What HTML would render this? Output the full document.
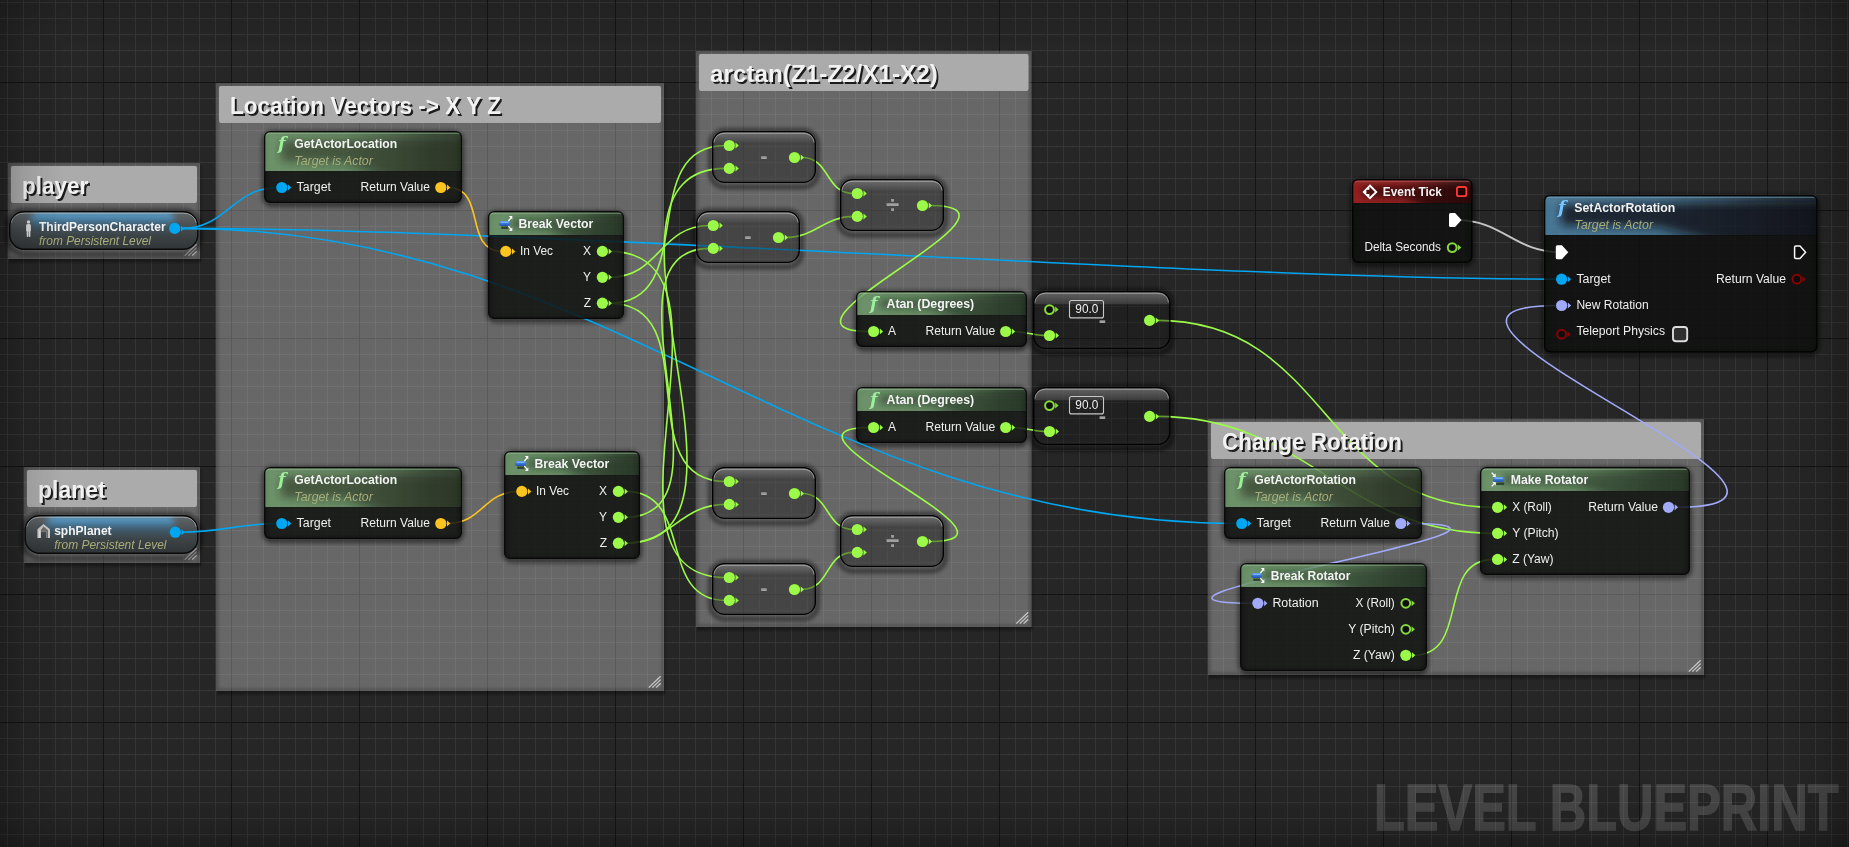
<!DOCTYPE html>
<html><head><meta charset="utf-8"><title>Level Blueprint</title>
<style>
html,body{margin:0;padding:0;background:#262626;overflow:hidden}
body{width:1849px;height:847px;position:relative;font-family:"Liberation Sans",sans-serif}
#grid{position:absolute;left:0;top:0;width:1849px;height:847px;background-color:#262626;
background-image:
linear-gradient(90deg,#141414 1px,transparent 1px),
linear-gradient(0deg,#141414 1px,transparent 1px),
linear-gradient(90deg,#353535 1px,transparent 1px),
linear-gradient(0deg,#353535 1px,transparent 1px);
background-size:128px 128px,128px 128px,16px 16px,16px 16px;
background-position:103px 0,0 -45px,7px 0,0 3px}
#vig{position:absolute;left:0;top:0;width:1849px;height:847px;
background:linear-gradient(90deg,rgba(0,0,0,.2),rgba(0,0,0,.08) 1.4%,rgba(0,0,0,0) 3.4%,rgba(0,0,0,0) 96.6%,rgba(0,0,0,.08) 98.6%,rgba(0,0,0,.2)),
linear-gradient(180deg,rgba(0,0,0,.1),rgba(0,0,0,0) 5%,rgba(0,0,0,0) 92%,rgba(0,0,0,.08) 97%,rgba(0,0,0,.2))}
svg{position:absolute;left:0;top:0}
text{font-family:"Liberation Sans",sans-serif;fill:#fff}
.ct{font-size:23.5px;font-weight:bold;fill:#f2f2f2}
.cts{font-size:23.5px;font-weight:bold;fill:#1c1c1c}
.nt{font-size:12px;font-weight:bold;fill:#f4f4f4}
.st{font-size:12px;font-style:italic;fill:#a9ae7c}
.pl{font-size:12px;fill:#f0f0f0}
.fi{font-family:"DejaVu Serif",serif;font-style:italic;font-weight:bold;font-size:17.5px}
.cg{font-size:22px;font-weight:bold;fill:#a0a0a0}
.cd{font-size:24px;font-weight:bold;fill:#a0a0a0}
.wm{font-size:65.5px;font-weight:bold;fill:#fff;stroke:#fff;stroke-width:1.4px;opacity:.155}
.sh2{fill:none;stroke:#000;stroke-width:4;stroke-opacity:.55;filter:url(#blur2)}
.sh{fill:none;stroke:#000;stroke-width:5;stroke-opacity:.62;filter:url(#blur)}
#wires path{fill:none}
</style></head>
<body>
<div id="grid"></div>
<svg width="1849" height="847" viewBox="0 0 1849 847">
<defs>
<filter id="b2" x="-5%" y="-5%" width="110%" height="110%"><feGaussianBlur stdDeviation="1.6"/></filter>
<linearGradient id="cshb" x1="0" y1="0" x2="0" y2="1"><stop offset="0" stop-color="#000" stop-opacity=".42"/><stop offset="1" stop-color="#000" stop-opacity="0"/></linearGradient>
<linearGradient id="cshr" x1="0" y1="0" x2="1" y2="0"><stop offset="0" stop-color="#000" stop-opacity=".18"/><stop offset="1" stop-color="#000" stop-opacity="0"/></linearGradient>
<filter id="hb4" x="-20%" y="-50%" width="140%" height="200%"><feGaussianBlur stdDeviation="4"/></filter>
<filter id="hb3" x="-20%" y="-80%" width="140%" height="260%"><feGaussianBlur stdDeviation="3.2"/></filter>
<linearGradient id="sg"><stop offset="0" stop-color="#6f9c6c"/><stop offset=".4" stop-color="#6f9c6c" stop-opacity=".92"/><stop offset=".65" stop-color="#6f9c6c" stop-opacity=".6"/><stop offset=".85" stop-color="#6f9c6c" stop-opacity=".3"/><stop offset="1" stop-color="#6f9c6c" stop-opacity=".16"/></linearGradient>
<linearGradient id="sb"><stop offset="0" stop-color="#4f88ab"/><stop offset=".4" stop-color="#4f88ab" stop-opacity=".92"/><stop offset=".65" stop-color="#4f88ab" stop-opacity=".6"/><stop offset=".85" stop-color="#4f88ab" stop-opacity=".3"/><stop offset="1" stop-color="#4f88ab" stop-opacity=".16"/></linearGradient>
<linearGradient id="sr"><stop offset="0" stop-color="#ac2020"/><stop offset=".4" stop-color="#ac2020" stop-opacity=".92"/><stop offset=".65" stop-color="#ac2020" stop-opacity=".6"/><stop offset=".85" stop-color="#ac2020" stop-opacity=".3"/><stop offset="1" stop-color="#ac2020" stop-opacity=".16"/></linearGradient>
<filter id="blur2" x="-20%" y="-30%" width="140%" height="170%"><feGaussianBlur stdDeviation="2"/></filter>
<filter id="blur" x="-20%" y="-20%" width="140%" height="160%"><feGaussianBlur stdDeviation="2.6"/></filter>
<linearGradient id="pill" x1="0" y1="0" x2="0" y2="1"><stop offset="0" stop-color="#4f94ee"/><stop offset=".5" stop-color="#3a78da"/><stop offset="1" stop-color="#2450a8"/></linearGradient>
<linearGradient id="gloss" x1="0" y1="0" x2="0" y2="1"><stop offset="0" stop-color="#fff" stop-opacity=".1"/><stop offset=".3" stop-color="#fff" stop-opacity="0"/><stop offset="1" stop-color="#fff" stop-opacity="0"/></linearGradient>
<linearGradient id="cg" x1="0" y1="0" x2="0" y2="1"><stop offset="0" stop-color="#747474" stop-opacity=".82"/><stop offset=".215" stop-color="#404040" stop-opacity=".82"/><stop offset=".235" stop-color="#181818" stop-opacity=".43"/><stop offset=".92" stop-color="#181818" stop-opacity=".43"/><stop offset="1" stop-color="#262626" stop-opacity=".45"/></linearGradient>
<linearGradient id="vg" x1="0" y1="0" x2="0" y2="1"><stop offset="0" stop-color="#62676a" stop-opacity=".95"/><stop offset=".45" stop-color="#42484b" stop-opacity=".94"/><stop offset="1" stop-color="#2c3133" stop-opacity=".94"/></linearGradient>
<linearGradient id="vglow" x1="0" y1="0" x2="0" y2="1"><stop offset="0" stop-color="#70c0f4"/><stop offset=".25" stop-color="#4596cc" stop-opacity=".75"/><stop offset=".6" stop-color="#2f6a90" stop-opacity=".4"/><stop offset="1" stop-color="#2a5a78" stop-opacity=".05"/></linearGradient>
<clipPath id="c1"><rect x="10.5" y="212.5" width="186.5" height="36" rx="13.5"/></clipPath>
<clipPath id="c2"><rect x="26" y="516.5" width="171" height="36" rx="13.5"/></clipPath>
<clipPath id="c3"><path d="M1.4 40V6q0-4.6 4.6-4.6H192q4.6 0 4.6 4.6V40z"/></clipPath>
<clipPath id="c4"><path d="M1.4 40V6q0-4.6 4.6-4.6H192q4.6 0 4.6 4.6V40z"/></clipPath>
<clipPath id="c5"><path d="M1.4 40V6q0-4.6 4.6-4.6H192q4.6 0 4.6 4.6V40z"/></clipPath>
<clipPath id="c6"><path d="M1.4 24V6q0-4.6 4.6-4.6H130q4.6 0 4.6 4.6V24z"/></clipPath>
<clipPath id="c7"><path d="M1.4 24V6q0-4.6 4.6-4.6H130q4.6 0 4.6 4.6V24z"/></clipPath>
<clipPath id="c8"><path d="M1.4 24V6q0-4.6 4.6-4.6H165q4.6 0 4.6 4.6V24z"/></clipPath>
<clipPath id="c9"><path d="M1.4 24V6q0-4.6 4.6-4.6H165q4.6 0 4.6 4.6V24z"/></clipPath>
<clipPath id="c10"><path d="M1.4 24V6q0-4.6 4.6-4.6H114.5q4.6 0 4.6 4.6V24z"/></clipPath>
<clipPath id="c11"><path d="M1.4 40V6q0-4.6 4.6-4.6H267.5q4.6 0 4.6 4.6V40z"/></clipPath>
<clipPath id="c12"><path d="M1.4 24V6q0-4.6 4.6-4.6H204q4.6 0 4.6 4.6V24z"/></clipPath>
<clipPath id="c13"><path d="M1.4 24V6q0-4.6 4.6-4.6H181q4.6 0 4.6 4.6V24z"/></clipPath></defs>
<g id="comments">
<rect x="9" y="259" width="192" height="6" fill="url(#cshb)"/>
<rect x="200" y="165" width="4" height="96" fill="url(#cshr)"/>
<rect x="8" y="163" width="192" height="96" fill="#fff" fill-opacity=".2"/>
<rect x="10.5" y="165.5" width="187" height="91" rx="2" fill="#fff" fill-opacity=".125" filter="url(#b2)"/>
<rect x="11" y="166.1" width="186" height="36.8" rx="1.8" fill="#ababab"/>
<path d="M196.7 244.2l-12 11.4M196.7 247.6l-8.4 8M196.7 251.3l-4.6 4.3" stroke="#c8c8c8" stroke-width="1.25" fill="none"/>
<rect x="25" y="563" width="176" height="6" fill="url(#cshb)"/>
<rect x="200" y="469" width="4" height="96" fill="url(#cshr)"/>
<rect x="24" y="467" width="176" height="96" fill="#fff" fill-opacity=".2"/>
<rect x="26.5" y="469.5" width="171" height="91" rx="2" fill="#fff" fill-opacity=".125" filter="url(#b2)"/>
<rect x="27" y="470.1" width="170" height="36.8" rx="1.8" fill="#ababab"/>
<path d="M196.7 548.2l-12 11.4M196.7 551.6l-8.4 8M196.7 555.3l-4.6 4.3" stroke="#c8c8c8" stroke-width="1.25" fill="none"/>
<rect x="217" y="691" width="448" height="6" fill="url(#cshb)"/>
<rect x="664" y="85" width="4" height="608" fill="url(#cshr)"/>
<rect x="216" y="83" width="448" height="608" fill="#fff" fill-opacity=".2"/>
<rect x="218.5" y="85.5" width="443" height="603" rx="2" fill="#fff" fill-opacity=".125" filter="url(#b2)"/>
<rect x="219" y="86.1" width="442" height="36.8" rx="1.8" fill="#ababab"/>
<path d="M660.7 676.2l-12 11.4M660.7 679.6l-8.4 8M660.7 683.3l-4.6 4.3" stroke="#c8c8c8" stroke-width="1.25" fill="none"/>
<rect x="697" y="627" width="335.5" height="6" fill="url(#cshb)"/>
<rect x="1031.5" y="53" width="4" height="576" fill="url(#cshr)"/>
<rect x="696" y="51" width="335.5" height="576" fill="#fff" fill-opacity=".2"/>
<rect x="698.5" y="53.5" width="330.5" height="571" rx="2" fill="#fff" fill-opacity=".125" filter="url(#b2)"/>
<rect x="699" y="54.1" width="329.5" height="36.8" rx="1.8" fill="#ababab"/>
<path d="M1028.2 612.2l-12 11.4M1028.2 615.6l-8.4 8M1028.2 619.3l-4.6 4.3" stroke="#c8c8c8" stroke-width="1.25" fill="none"/>
<rect x="1209" y="675" width="496" height="6" fill="url(#cshb)"/>
<rect x="1704" y="421" width="4" height="256" fill="url(#cshr)"/>
<rect x="1208" y="419" width="496" height="256" fill="#fff" fill-opacity=".2"/>
<rect x="1210.5" y="421.5" width="491" height="251" rx="2" fill="#fff" fill-opacity=".125" filter="url(#b2)"/>
<rect x="1211" y="422.1" width="490" height="36.8" rx="1.8" fill="#ababab"/>
<path d="M1700.7 660.2l-12 11.4M1700.7 663.6l-8.4 8M1700.7 667.3l-4.6 4.3" stroke="#c8c8c8" stroke-width="1.25" fill="none"/>
</g>
<g id="shadows">
<rect x="7.5" y="210.5" width="192.5" height="43.5" rx="16.5" class="sh2"/>
<rect x="9.7" y="211.7" width="188.1" height="37.6" rx="14.5" fill="url(#vg)" stroke="#0a0a0a" stroke-width="1.4"/>
<g clip-path="url(#c1)"><rect x="31" y="212" width="143.5" height="22" rx="6" fill="url(#vglow)" filter="url(#hb3)"/></g>
<path d="M11.2 222.8q2.5-9.6 13-9.6H183.3q10.5 0 13 9.6" fill="none" stroke="#fff" stroke-opacity=".4" stroke-width="1"/>
<rect x="23" y="514.5" width="177" height="43.5" rx="16.5" class="sh2"/>
<rect x="25.2" y="515.7" width="172.6" height="37.6" rx="14.5" fill="url(#vg)" stroke="#0a0a0a" stroke-width="1.4"/>
<g clip-path="url(#c2)"><rect x="46.5" y="516" width="128" height="22" rx="6" fill="url(#vglow)" filter="url(#hb3)"/></g>
<path d="M26.7 526.8q2.5-9.6 13-9.6H183.3q10.5 0 13 9.6" fill="none" stroke="#fff" stroke-opacity=".4" stroke-width="1"/>
<g transform="translate(24.5 220)" fill="#d8d8d8"><circle cx="4" cy="2" r="1.7"/><rect x="1.6" y="4" width="4.8" height="7.5" rx="1.6"/><rect x="2.2" y="10" width="1.7" height="7" rx=".8"/><rect x="4.2" y="10" width="1.7" height="7" rx=".8"/></g>
<g transform="translate(37 524)"><path d="M6.5 0L13 5.2V14H9.4V7.6H3.8V14H.4V5.2z" fill="#c9c9c9"/><path d="M6.5 2.6L11 6.2V14H9.4V7.6H3.8V6.2z" fill="#6e6e6e"/><path d="M2 6.4h1.8V14H2z" fill="#fff" fill-opacity=".5"/></g>
<rect x="265" y="133.5" width="196" height="70.5" rx="7" class="sh"/>
<rect x="265" y="469.5" width="196" height="70.5" rx="7" class="sh"/>
<rect x="1225" y="469.5" width="196" height="70.5" rx="7" class="sh"/>
<rect x="489" y="213.5" width="134" height="106.5" rx="7" class="sh"/>
<rect x="505" y="453.5" width="134" height="106.5" rx="7" class="sh"/>
<rect x="710.5" y="130.5" width="107" height="56.5" rx="14" class="sh2"/>
<rect x="694.5" y="210.5" width="107" height="56.5" rx="14" class="sh2"/>
<rect x="838.5" y="178.5" width="107" height="56.5" rx="14" class="sh2"/>
<rect x="710.5" y="466.5" width="107" height="56.5" rx="14" class="sh2"/>
<rect x="710.5" y="562.5" width="107" height="56.5" rx="14" class="sh2"/>
<rect x="838.5" y="514.5" width="107" height="56.5" rx="14" class="sh2"/>
<rect x="857" y="293.5" width="169" height="54.5" rx="7" class="sh"/>
<rect x="857" y="389.5" width="169" height="54.5" rx="7" class="sh"/>
<rect x="1031.5" y="290.5" width="140.5" height="62.5" rx="14" class="sh2"/>
<rect x="1031.5" y="386.5" width="140.5" height="62.5" rx="14" class="sh2"/>
<rect x="1353" y="181.5" width="118.5" height="82.5" rx="7" class="sh"/>
<rect x="1545" y="197.5" width="271.5" height="156" rx="7" class="sh"/>
<rect x="1481" y="469.5" width="208" height="106.5" rx="7" class="sh"/>
<rect x="1241" y="565.5" width="185" height="106.5" rx="7" class="sh"/>
</g>
<g id="wires">
<path d="M181.7 228.4C227.53 228.4 232.47 187.5 278.3 187.5" stroke="#00a6f0" stroke-width="1.6"/>
<path d="M181.7 228.4C531.97 228.4 1207.83 279.2 1558.1 279.2" stroke="#00a6f0" stroke-width="1.6"/>
<path d="M181.7 228.4C613.4 228.4 806.6 523.5 1238.3 523.5" stroke="#00a6f0" stroke-width="1.6"/>
<path d="M182.3 532.2C217.2 532.2 243.4 523.5 278.3 523.5" stroke="#00a6f0" stroke-width="1.6"/>
<path d="M447.8 187.5C487.27 187.5 462.83 251.4 502.3 251.4" stroke="#fcc41e" stroke-width="1.6"/>
<path d="M447.8 523.5C482 523.5 484.1 491.4 518.3 491.4" stroke="#fcc41e" stroke-width="1.6"/>
<path d="M609.4 251.4C756.9 251.4 578.3 577.5 725.8 577.5" stroke="#9bf947" stroke-width="1.6"/>
<path d="M609.4 277.3C660.13 277.3 659.07 225.5 709.8 225.5" stroke="#9bf947" stroke-width="1.6"/>
<path d="M609.4 303.2C700.77 303.2 634.43 145.5 725.8 145.5" stroke="#9bf947" stroke-width="1.6"/>
<path d="M609.4 303.2C707.63 303.2 627.57 481.5 725.8 481.5" stroke="#9bf947" stroke-width="1.6"/>
<path d="M625.4 491.4C695.2 491.4 656 600.4 725.8 600.4" stroke="#9bf947" stroke-width="1.6"/>
<path d="M625.4 517.3C743.17 517.3 592.03 248.4 709.8 248.4" stroke="#9bf947" stroke-width="1.6"/>
<path d="M625.4 543.2C783.8 543.2 567.4 168.4 725.8 168.4" stroke="#9bf947" stroke-width="1.6"/>
<path d="M625.4 543.2C671.8 543.2 679.4 504.4 725.8 504.4" stroke="#9bf947" stroke-width="1.6"/>
<path d="M801.5 157.5C830.93 157.5 824.37 193.5 853.8 193.5" stroke="#9bf947" stroke-width="1.6"/>
<path d="M785.5 237.5C815.3 237.5 824 216.4 853.8 216.4" stroke="#9bf947" stroke-width="1.6"/>
<path d="M801.5 493.5C830.93 493.5 824.37 529.5 853.8 529.5" stroke="#9bf947" stroke-width="1.6"/>
<path d="M801.5 589.5C831.3 589.5 824 552.4 853.8 552.4" stroke="#9bf947" stroke-width="1.6"/>
<path d="M929.5 205.5C1051.9 205.5 747.7 331.5 870.1 331.5" stroke="#9bf947" stroke-width="1.6"/>
<path d="M929.5 541.5C1045.9 541.5 753.7 427.5 870.1 427.5" stroke="#9bf947" stroke-width="1.6"/>
<path d="M1012.7 331.5C1025.13 331.5 1033.57 335.5 1046 335.5" stroke="#9bf947" stroke-width="1.6"/>
<path d="M1012.7 427.5C1025.13 427.5 1033.57 431.5 1046 431.5" stroke="#9bf947" stroke-width="1.6"/>
<path d="M1156.6 320.4C1331.4 320.4 1319.3 507.3 1494.1 507.3" stroke="#9bf947" stroke-width="1.6"/>
<path d="M1156.6 416.4C1308.08 416.4 1342.62 533.35 1494.1 533.35" stroke="#9bf947" stroke-width="1.6"/>
<path d="M1412.8 655.3C1471.87 655.3 1435.03 559.4 1494.1 559.4" stroke="#9bf947" stroke-width="1.6"/>
<path d="M1407.8 523.5C1601.1 523.5 1061.1 603.3 1254.4 603.3" stroke="#a0aaf8" stroke-width="1.6"/>
<path d="M1675.5 507.3C1892.9 507.3 1340.7 305.5 1558.1 305.5" stroke="#a0aaf8" stroke-width="1.6"/>
<path d="M1457 220.1C1502.03 220.1 1514.97 252.2 1560 252.2" stroke="#c4c4c4" stroke-width="1.9"/>
</g>
<g id="nodes">
<circle cx="174.7" cy="228.4" r="5.6" fill="#00a6f0"/>
<path d="M180.9 225.4l3.3 3-3.3 3z" fill="#00a6f0"/>
<circle cx="175.3" cy="532.2" r="5.6" fill="#00a6f0"/>
<path d="M181.5 529.2l3.3 3-3.3 3z" fill="#00a6f0"/>
<g transform="translate(264 131)" opacity=".83">
<rect x=".7" y=".7" width="196.6" height="70.6" rx="5.5" fill="#0e100e" stroke="#000" stroke-width="1.4"/>
<g clip-path="url(#c3)">
<rect width="198" height="40" fill="#1a2a18" fill-opacity=".7"/>
<rect width="198" height="40" fill="url(#sg)"/>
<path d="M17 9.5L204 7L204 48L130.68 48L83.16 32L17 30.5z" fill="#1a2a18" fill-opacity=".58" filter="url(#hb4)"/>
<rect width="198" height="40" fill="url(#gloss)"/>
<path d="M1.4 2.1H196.6" stroke="#a6dca2" stroke-opacity=".6" stroke-width="1.1"/>
</g>
<path d="M1.4 40.5H196.6" stroke="#0a0b0a" stroke-opacity=".75" stroke-width="1"/>
</g>
<circle cx="281.8" cy="187.5" r="5.6" fill="#00a6f0"/>
<path d="M288 184.5l3.3 3-3.3 3z" fill="#00a6f0"/>
<circle cx="440.8" cy="187.5" r="5.6" fill="#fcc41e"/>
<path d="M447 184.5l3.3 3-3.3 3z" fill="#fcc41e"/>
<g transform="translate(264 467)" opacity=".83">
<rect x=".7" y=".7" width="196.6" height="70.6" rx="5.5" fill="#0e100e" stroke="#000" stroke-width="1.4"/>
<g clip-path="url(#c4)">
<rect width="198" height="40" fill="#1a2a18" fill-opacity=".7"/>
<rect width="198" height="40" fill="url(#sg)"/>
<path d="M17 9.5L204 7L204 48L130.68 48L83.16 32L17 30.5z" fill="#1a2a18" fill-opacity=".58" filter="url(#hb4)"/>
<rect width="198" height="40" fill="url(#gloss)"/>
<path d="M1.4 2.1H196.6" stroke="#a6dca2" stroke-opacity=".6" stroke-width="1.1"/>
</g>
<path d="M1.4 40.5H196.6" stroke="#0a0b0a" stroke-opacity=".75" stroke-width="1"/>
</g>
<circle cx="281.8" cy="523.5" r="5.6" fill="#00a6f0"/>
<path d="M288 520.5l3.3 3-3.3 3z" fill="#00a6f0"/>
<circle cx="440.8" cy="523.5" r="5.6" fill="#fcc41e"/>
<path d="M447 520.5l3.3 3-3.3 3z" fill="#fcc41e"/>
<g transform="translate(1224 467)" opacity=".83">
<rect x=".7" y=".7" width="196.6" height="70.6" rx="5.5" fill="#0e100e" stroke="#000" stroke-width="1.4"/>
<g clip-path="url(#c5)">
<rect width="198" height="40" fill="#1a2a18" fill-opacity=".7"/>
<rect width="198" height="40" fill="url(#sg)"/>
<path d="M17 9.5L204 7L204 48L130.68 48L83.16 32L17 30.5z" fill="#1a2a18" fill-opacity=".58" filter="url(#hb4)"/>
<rect width="198" height="40" fill="url(#gloss)"/>
<path d="M1.4 2.1H196.6" stroke="#a6dca2" stroke-opacity=".6" stroke-width="1.1"/>
</g>
<path d="M1.4 40.5H196.6" stroke="#0a0b0a" stroke-opacity=".75" stroke-width="1"/>
</g>
<circle cx="1241.8" cy="523.5" r="5.6" fill="#00a6f0"/>
<path d="M1248 520.5l3.3 3-3.3 3z" fill="#00a6f0"/>
<circle cx="1400.8" cy="523.5" r="5.6" fill="#a0aaf8"/>
<path d="M1407 520.5l3.3 3-3.3 3z" fill="#a0aaf8"/>
<g transform="translate(488 211)" opacity=".83">
<rect x=".7" y=".7" width="134.6" height="106.6" rx="5.5" fill="#0e100e" stroke="#000" stroke-width="1.4"/>
<g clip-path="url(#c6)">
<rect width="136" height="24" fill="#1a2a18" fill-opacity=".7"/>
<rect width="136" height="24" fill="url(#sg)"/>
<path d="M24 8L142 6.5L142 32L95.2 32L61.2 18.5L24 17.5z" fill="#1a2a18" fill-opacity=".5" filter="url(#hb3)"/>
<rect width="136" height="24" fill="url(#gloss)"/>
<path d="M1.4 2.1H134.6" stroke="#a6dca2" stroke-opacity=".6" stroke-width="1.1"/>
</g>
<path d="M1.4 24.5H134.6" stroke="#0a0b0a" stroke-opacity=".75" stroke-width="1"/>
</g>
<g transform="translate(498 215.5)">
<rect x="3" y="10.9" width="7.6" height="2.7" rx="1.3" fill="#0a160a" fill-opacity=".6"/>
<rect x="1" y="5.4" width="11.2" height="5.1" rx="2.5" fill="url(#pill)"/>
<rect x="2.6" y="6.1" width="8" height="1.5" rx=".7" fill="#8cc0ff" fill-opacity=".75"/>
<path d="M10.4 5.5L13 2.4M10.4 10.6L13 13.6" stroke="#fff" stroke-width="1.3" fill="none"/>
<path d="M14.3 .5v3.6L10.8.5zM14.3 15.6v-3.6l-3.5 3.6z" fill="#fff"/>
</g>
<circle cx="505.8" cy="251.4" r="5.6" fill="#fcc41e"/>
<path d="M512 248.4l3.3 3-3.3 3z" fill="#fcc41e"/>
<circle cx="602.4" cy="251.4" r="5.6" fill="#9bf947"/>
<path d="M608.6 248.4l3.3 3-3.3 3z" fill="#9bf947"/>
<circle cx="602.4" cy="277.3" r="5.6" fill="#9bf947"/>
<path d="M608.6 274.3l3.3 3-3.3 3z" fill="#9bf947"/>
<circle cx="602.4" cy="303.2" r="5.6" fill="#9bf947"/>
<path d="M608.6 300.2l3.3 3-3.3 3z" fill="#9bf947"/>
<g transform="translate(504 451)" opacity=".83">
<rect x=".7" y=".7" width="134.6" height="106.6" rx="5.5" fill="#0e100e" stroke="#000" stroke-width="1.4"/>
<g clip-path="url(#c7)">
<rect width="136" height="24" fill="#1a2a18" fill-opacity=".7"/>
<rect width="136" height="24" fill="url(#sg)"/>
<path d="M24 8L142 6.5L142 32L95.2 32L61.2 18.5L24 17.5z" fill="#1a2a18" fill-opacity=".5" filter="url(#hb3)"/>
<rect width="136" height="24" fill="url(#gloss)"/>
<path d="M1.4 2.1H134.6" stroke="#a6dca2" stroke-opacity=".6" stroke-width="1.1"/>
</g>
<path d="M1.4 24.5H134.6" stroke="#0a0b0a" stroke-opacity=".75" stroke-width="1"/>
</g>
<g transform="translate(514 455.5)">
<rect x="3" y="10.9" width="7.6" height="2.7" rx="1.3" fill="#0a160a" fill-opacity=".6"/>
<rect x="1" y="5.4" width="11.2" height="5.1" rx="2.5" fill="url(#pill)"/>
<rect x="2.6" y="6.1" width="8" height="1.5" rx=".7" fill="#8cc0ff" fill-opacity=".75"/>
<path d="M10.4 5.5L13 2.4M10.4 10.6L13 13.6" stroke="#fff" stroke-width="1.3" fill="none"/>
<path d="M14.3 .5v3.6L10.8.5zM14.3 15.6v-3.6l-3.5 3.6z" fill="#fff"/>
</g>
<circle cx="521.8" cy="491.4" r="5.6" fill="#fcc41e"/>
<path d="M528 488.4l3.3 3-3.3 3z" fill="#fcc41e"/>
<circle cx="618.4" cy="491.4" r="5.6" fill="#9bf947"/>
<path d="M624.6 488.4l3.3 3-3.3 3z" fill="#9bf947"/>
<circle cx="618.4" cy="517.3" r="5.6" fill="#9bf947"/>
<path d="M624.6 514.3l3.3 3-3.3 3z" fill="#9bf947"/>
<circle cx="618.4" cy="543.2" r="5.6" fill="#9bf947"/>
<path d="M624.6 540.2l3.3 3-3.3 3z" fill="#9bf947"/>
<rect x="712.65" y="131.65" width="102.7" height="50.7" rx="12" fill="url(#cg)" stroke="#000" stroke-width="1.3"/>
<path d="M714 142.5q1-9.2 11.5-9.2H802.5q10.5 0 11.5 9.2" fill="none" stroke="#fff" stroke-opacity=".38" stroke-width="1"/>
<circle cx="729.3" cy="145.5" r="5.6" fill="#9bf947"/>
<path d="M735.5 142.5l3.3 3-3.3 3z" fill="#9bf947"/>
<circle cx="729.3" cy="168.4" r="5.6" fill="#9bf947"/>
<path d="M735.5 165.4l3.3 3-3.3 3z" fill="#9bf947"/>
<circle cx="794.5" cy="157.5" r="5.6" fill="#9bf947"/>
<path d="M800.7 154.5l3.3 3-3.3 3z" fill="#9bf947"/>
<rect x="696.65" y="211.65" width="102.7" height="50.7" rx="12" fill="url(#cg)" stroke="#000" stroke-width="1.3"/>
<path d="M698 222.5q1-9.2 11.5-9.2H786.5q10.5 0 11.5 9.2" fill="none" stroke="#fff" stroke-opacity=".38" stroke-width="1"/>
<circle cx="713.3" cy="225.5" r="5.6" fill="#9bf947"/>
<path d="M719.5 222.5l3.3 3-3.3 3z" fill="#9bf947"/>
<circle cx="713.3" cy="248.4" r="5.6" fill="#9bf947"/>
<path d="M719.5 245.4l3.3 3-3.3 3z" fill="#9bf947"/>
<circle cx="778.5" cy="237.5" r="5.6" fill="#9bf947"/>
<path d="M784.7 234.5l3.3 3-3.3 3z" fill="#9bf947"/>
<rect x="840.65" y="179.65" width="102.7" height="50.7" rx="12" fill="url(#cg)" stroke="#000" stroke-width="1.3"/>
<path d="M842 190.5q1-9.2 11.5-9.2H930.5q10.5 0 11.5 9.2" fill="none" stroke="#fff" stroke-opacity=".38" stroke-width="1"/>
<circle cx="857.3" cy="193.5" r="5.6" fill="#9bf947"/>
<path d="M863.5 190.5l3.3 3-3.3 3z" fill="#9bf947"/>
<circle cx="857.3" cy="216.4" r="5.6" fill="#9bf947"/>
<path d="M863.5 213.4l3.3 3-3.3 3z" fill="#9bf947"/>
<circle cx="922.5" cy="205.5" r="5.6" fill="#9bf947"/>
<path d="M928.7 202.5l3.3 3-3.3 3z" fill="#9bf947"/>
<rect x="712.65" y="467.65" width="102.7" height="50.7" rx="12" fill="url(#cg)" stroke="#000" stroke-width="1.3"/>
<path d="M714 478.5q1-9.2 11.5-9.2H802.5q10.5 0 11.5 9.2" fill="none" stroke="#fff" stroke-opacity=".38" stroke-width="1"/>
<circle cx="729.3" cy="481.5" r="5.6" fill="#9bf947"/>
<path d="M735.5 478.5l3.3 3-3.3 3z" fill="#9bf947"/>
<circle cx="729.3" cy="504.4" r="5.6" fill="#9bf947"/>
<path d="M735.5 501.4l3.3 3-3.3 3z" fill="#9bf947"/>
<circle cx="794.5" cy="493.5" r="5.6" fill="#9bf947"/>
<path d="M800.7 490.5l3.3 3-3.3 3z" fill="#9bf947"/>
<rect x="712.65" y="563.65" width="102.7" height="50.7" rx="12" fill="url(#cg)" stroke="#000" stroke-width="1.3"/>
<path d="M714 574.5q1-9.2 11.5-9.2H802.5q10.5 0 11.5 9.2" fill="none" stroke="#fff" stroke-opacity=".38" stroke-width="1"/>
<circle cx="729.3" cy="577.5" r="5.6" fill="#9bf947"/>
<path d="M735.5 574.5l3.3 3-3.3 3z" fill="#9bf947"/>
<circle cx="729.3" cy="600.4" r="5.6" fill="#9bf947"/>
<path d="M735.5 597.4l3.3 3-3.3 3z" fill="#9bf947"/>
<circle cx="794.5" cy="589.5" r="5.6" fill="#9bf947"/>
<path d="M800.7 586.5l3.3 3-3.3 3z" fill="#9bf947"/>
<rect x="840.65" y="515.65" width="102.7" height="50.7" rx="12" fill="url(#cg)" stroke="#000" stroke-width="1.3"/>
<path d="M842 526.5q1-9.2 11.5-9.2H930.5q10.5 0 11.5 9.2" fill="none" stroke="#fff" stroke-opacity=".38" stroke-width="1"/>
<circle cx="857.3" cy="529.5" r="5.6" fill="#9bf947"/>
<path d="M863.5 526.5l3.3 3-3.3 3z" fill="#9bf947"/>
<circle cx="857.3" cy="552.4" r="5.6" fill="#9bf947"/>
<path d="M863.5 549.4l3.3 3-3.3 3z" fill="#9bf947"/>
<circle cx="922.5" cy="541.5" r="5.6" fill="#9bf947"/>
<path d="M928.7 538.5l3.3 3-3.3 3z" fill="#9bf947"/>
<g transform="translate(856 291)" opacity=".83">
<rect x=".7" y=".7" width="169.6" height="54.6" rx="5.5" fill="#0e100e" stroke="#000" stroke-width="1.4"/>
<g clip-path="url(#c8)">
<rect width="171" height="24" fill="#1a2a18" fill-opacity=".7"/>
<rect width="171" height="24" fill="url(#sg)"/>
<path d="M24 8L177 6.5L177 32L119.7 32L76.95 18.5L24 17.5z" fill="#1a2a18" fill-opacity=".5" filter="url(#hb3)"/>
<rect width="171" height="24" fill="url(#gloss)"/>
<path d="M1.4 2.1H169.6" stroke="#a6dca2" stroke-opacity=".6" stroke-width="1.1"/>
</g>
<path d="M1.4 24.5H169.6" stroke="#0a0b0a" stroke-opacity=".75" stroke-width="1"/>
</g>
<circle cx="873.6" cy="331.5" r="5.6" fill="#9bf947"/>
<path d="M879.8 328.5l3.3 3-3.3 3z" fill="#9bf947"/>
<circle cx="1005.7" cy="331.5" r="5.6" fill="#9bf947"/>
<path d="M1011.9 328.5l3.3 3-3.3 3z" fill="#9bf947"/>
<g transform="translate(856 387)" opacity=".83">
<rect x=".7" y=".7" width="169.6" height="54.6" rx="5.5" fill="#0e100e" stroke="#000" stroke-width="1.4"/>
<g clip-path="url(#c9)">
<rect width="171" height="24" fill="#1a2a18" fill-opacity=".7"/>
<rect width="171" height="24" fill="url(#sg)"/>
<path d="M24 8L177 6.5L177 32L119.7 32L76.95 18.5L24 17.5z" fill="#1a2a18" fill-opacity=".5" filter="url(#hb3)"/>
<rect width="171" height="24" fill="url(#gloss)"/>
<path d="M1.4 2.1H169.6" stroke="#a6dca2" stroke-opacity=".6" stroke-width="1.1"/>
</g>
<path d="M1.4 24.5H169.6" stroke="#0a0b0a" stroke-opacity=".75" stroke-width="1"/>
</g>
<circle cx="873.6" cy="427.5" r="5.6" fill="#9bf947"/>
<path d="M879.8 424.5l3.3 3-3.3 3z" fill="#9bf947"/>
<circle cx="1005.7" cy="427.5" r="5.6" fill="#9bf947"/>
<path d="M1011.9 424.5l3.3 3-3.3 3z" fill="#9bf947"/>
<rect x="1033.65" y="291.65" width="136.2" height="56.7" rx="12" fill="url(#cg)" stroke="#000" stroke-width="1.3"/>
<path d="M1035 302.5q1-9.2 11.5-9.2H1157q10.5 0 11.5 9.2" fill="none" stroke="#fff" stroke-opacity=".38" stroke-width="1"/>
<circle cx="1049.5" cy="309.6" r="4.4" fill="#0d0d0d" stroke="#86da3c" stroke-width="2"/>
<path d="M1055.2 306.6l3.4 3-3.4 3z" fill="#86da3c"/>
<circle cx="1049.5" cy="335.5" r="5.6" fill="#9bf947"/>
<path d="M1055.7 332.5l3.3 3-3.3 3z" fill="#9bf947"/>
<circle cx="1149.6" cy="320.4" r="5.6" fill="#9bf947"/>
<path d="M1155.8 317.4l3.3 3-3.3 3z" fill="#9bf947"/>
<rect x="1069.5" y="300.5" width="34" height="17.4" rx="2" fill="none" stroke="#c6c6c6" stroke-width="1.1"/>
<rect x="1033.65" y="387.65" width="136.2" height="56.7" rx="12" fill="url(#cg)" stroke="#000" stroke-width="1.3"/>
<path d="M1035 398.5q1-9.2 11.5-9.2H1157q10.5 0 11.5 9.2" fill="none" stroke="#fff" stroke-opacity=".38" stroke-width="1"/>
<circle cx="1049.5" cy="405.6" r="4.4" fill="#0d0d0d" stroke="#86da3c" stroke-width="2"/>
<path d="M1055.2 402.6l3.4 3-3.4 3z" fill="#86da3c"/>
<circle cx="1049.5" cy="431.5" r="5.6" fill="#9bf947"/>
<path d="M1055.7 428.5l3.3 3-3.3 3z" fill="#9bf947"/>
<circle cx="1149.6" cy="416.4" r="5.6" fill="#9bf947"/>
<path d="M1155.8 413.4l3.3 3-3.3 3z" fill="#9bf947"/>
<rect x="1069.5" y="396.5" width="34" height="17.4" rx="2" fill="none" stroke="#c6c6c6" stroke-width="1.1"/>
<g transform="translate(1352 179)" opacity=".83">
<rect x=".7" y=".7" width="119.1" height="82.6" rx="5.5" fill="#0e100e" stroke="#000" stroke-width="1.4"/>
<g clip-path="url(#c10)">
<rect width="120.5" height="24" fill="#260808" fill-opacity=".7"/>
<rect width="120.5" height="24" fill="url(#sr)"/>
<path d="M10 8L126.5 6.5L126.5 32L84.35 32L54.23 18.5L10 17.5z" fill="#260808" fill-opacity=".75" filter="url(#hb3)"/>
<rect width="120.5" height="24" fill="url(#gloss)"/>
<path d="M1.4 2.1H119.1" stroke="#f07070" stroke-opacity=".6" stroke-width="1.1"/>
</g>
<path d="M1.4 24.5H119.1" stroke="#0a0b0a" stroke-opacity=".75" stroke-width="1"/>
</g>
<path transform="translate(1370 191.9)" fill="#fff" fill-rule="evenodd" d="M0-7.6L7.6 0 0 7.6-7.6 0zM-3.6-2.1H-.6V-5.3L4.9 0-.6 5.3V2.1H-3.6z"/>
<rect x="1456.9" y="187" width="9.4" height="9.2" rx="2" fill="#220000" stroke="#ff3838" stroke-width="1.8"/>
<path d="M1450.5 213.1h4.6l6.4 7-6.4 7h-4.6q-1.5 0-1.5-1.5v-11q0-1.5 1.5-1.5z" fill="#fff"/>
<circle cx="1452.2" cy="247.6" r="4.4" fill="#0d0d0d" stroke="#86da3c" stroke-width="2"/>
<path d="M1457.9 244.6l3.4 3-3.4 3z" fill="#86da3c"/>
<g transform="translate(1544 195)" opacity=".83">
<rect x=".7" y=".7" width="272.1" height="156.1" rx="5.5" fill="#0e100e" stroke="#000" stroke-width="1.4"/>
<g clip-path="url(#c11)">
<rect width="273.5" height="40" fill="#0a141b" fill-opacity=".7"/>
<rect width="273.5" height="40" fill="url(#sb)"/>
<path d="M17 9.5L279.5 7L279.5 48L180.51 48L114.87 32L17 30.5z" fill="#0a141b" fill-opacity=".8" filter="url(#hb4)"/>
<rect width="273.5" height="40" fill="url(#gloss)"/>
<path d="M1.4 2.1H272.1" stroke="#8fd0f8" stroke-opacity=".6" stroke-width="1.1"/>
</g>
<path d="M1.4 40.5H272.1" stroke="#0a0b0a" stroke-opacity=".75" stroke-width="1"/>
</g>
<path d="M1557.3 245.2h4.6l6.4 7-6.4 7h-4.6q-1.5 0-1.5-1.5v-11q0-1.5 1.5-1.5z" fill="#fff"/>
<path d="M1795.8 246h4.2l5.6 6.2-5.6 6.2h-4.2q-1.2 0-1.2-1.2v-10q0-1.2 1.2-1.2z" fill="#0c0c0c" stroke="#fff" stroke-width="1.5"/>
<circle cx="1561.6" cy="279.2" r="5.6" fill="#00a6f0"/>
<path d="M1567.8 276.2l3.3 3-3.3 3z" fill="#00a6f0"/>
<circle cx="1796.8" cy="279.2" r="4.4" fill="#0d0d0d" stroke="#8e0000" stroke-width="2"/>
<path d="M1802.5 276.2l3.4 3-3.4 3z" fill="#8e0000"/>
<circle cx="1561.6" cy="305.5" r="5.6" fill="#a0aaf8"/>
<path d="M1567.8 302.5l3.3 3-3.3 3z" fill="#a0aaf8"/>
<circle cx="1561.6" cy="334.2" r="4.4" fill="#0d0d0d" stroke="#8e0000" stroke-width="2"/>
<path d="M1567.3 331.2l3.4 3-3.4 3z" fill="#8e0000"/>
<rect x="1673" y="327" width="14.2" height="14.2" rx="3" fill="#2f2f2f" stroke="#dcdcdc" stroke-width="1.9"/>
<g transform="translate(1480 467)" opacity=".83">
<rect x=".7" y=".7" width="208.6" height="106.6" rx="5.5" fill="#0e100e" stroke="#000" stroke-width="1.4"/>
<g clip-path="url(#c12)">
<rect width="210" height="24" fill="#1a2a18" fill-opacity=".7"/>
<rect width="210" height="24" fill="url(#sg)"/>
<path d="M24 8L216 6.5L216 32L147 32L94.5 18.5L24 17.5z" fill="#1a2a18" fill-opacity=".5" filter="url(#hb3)"/>
<rect width="210" height="24" fill="url(#gloss)"/>
<path d="M1.4 2.1H208.6" stroke="#a6dca2" stroke-opacity=".6" stroke-width="1.1"/>
</g>
<path d="M1.4 24.5H208.6" stroke="#0a0b0a" stroke-opacity=".75" stroke-width="1"/>
</g>
<g transform="translate(1490 471.5)">
<rect x="6" y="10.9" width="8.4" height="2.7" rx="1.3" fill="#0a160a" fill-opacity=".6"/>
<rect x="3" y="5.4" width="11.2" height="5.1" rx="2.5" fill="url(#pill)"/>
<rect x="4.6" y="6.1" width="8" height="1.5" rx=".7" fill="#8cc0ff" fill-opacity=".75"/>
<path d="M1.7 1.2L4.2 3.8M1.7 14.9L4.2 12.3" stroke="#fff" stroke-width="1.3" fill="none"/>
<path d="M5.7 5.5V2L2.3 5.5zM5.7 10.5V14L2.3 10.5z" fill="#fff"/>
</g>
<circle cx="1497.6" cy="507.3" r="5.6" fill="#9bf947"/>
<path d="M1503.8 504.3l3.3 3-3.3 3z" fill="#9bf947"/>
<circle cx="1497.6" cy="533.35" r="5.6" fill="#9bf947"/>
<path d="M1503.8 530.35l3.3 3-3.3 3z" fill="#9bf947"/>
<circle cx="1497.6" cy="559.4" r="5.6" fill="#9bf947"/>
<path d="M1503.8 556.4l3.3 3-3.3 3z" fill="#9bf947"/>
<circle cx="1668.5" cy="507.3" r="5.6" fill="#a0aaf8"/>
<path d="M1674.7 504.3l3.3 3-3.3 3z" fill="#a0aaf8"/>
<g transform="translate(1240 563)" opacity=".83">
<rect x=".7" y=".7" width="185.6" height="106.6" rx="5.5" fill="#0e100e" stroke="#000" stroke-width="1.4"/>
<g clip-path="url(#c13)">
<rect width="187" height="24" fill="#1a2a18" fill-opacity=".7"/>
<rect width="187" height="24" fill="url(#sg)"/>
<path d="M24 8L193 6.5L193 32L130.9 32L84.15 18.5L24 17.5z" fill="#1a2a18" fill-opacity=".5" filter="url(#hb3)"/>
<rect width="187" height="24" fill="url(#gloss)"/>
<path d="M1.4 2.1H185.6" stroke="#a6dca2" stroke-opacity=".6" stroke-width="1.1"/>
</g>
<path d="M1.4 24.5H185.6" stroke="#0a0b0a" stroke-opacity=".75" stroke-width="1"/>
</g>
<g transform="translate(1250 567.5)">
<rect x="3" y="10.9" width="7.6" height="2.7" rx="1.3" fill="#0a160a" fill-opacity=".6"/>
<rect x="1" y="5.4" width="11.2" height="5.1" rx="2.5" fill="url(#pill)"/>
<rect x="2.6" y="6.1" width="8" height="1.5" rx=".7" fill="#8cc0ff" fill-opacity=".75"/>
<path d="M10.4 5.5L13 2.4M10.4 10.6L13 13.6" stroke="#fff" stroke-width="1.3" fill="none"/>
<path d="M14.3 .5v3.6L10.8.5zM14.3 15.6v-3.6l-3.5 3.6z" fill="#fff"/>
</g>
<circle cx="1257.9" cy="603.3" r="5.6" fill="#a0aaf8"/>
<path d="M1264.1 600.3l3.3 3-3.3 3z" fill="#a0aaf8"/>
<circle cx="1405.8" cy="603.3" r="4.4" fill="#0d0d0d" stroke="#86da3c" stroke-width="2"/>
<path d="M1411.5 600.3l3.4 3-3.4 3z" fill="#86da3c"/>
<circle cx="1405.8" cy="629.3" r="4.4" fill="#0d0d0d" stroke="#86da3c" stroke-width="2"/>
<path d="M1411.5 626.3l3.4 3-3.4 3z" fill="#86da3c"/>
<circle cx="1405.8" cy="655.3" r="5.6" fill="#9bf947"/>
<path d="M1412 652.3l3.3 3-3.3 3z" fill="#9bf947"/>
</g>
<g id="labels" style="opacity:.999">
<text x="22" y="194" class="cts" transform="translate(1.9 1.9)" textLength="66.3" lengthAdjust="spacingAndGlyphs">player</text>
<text x="38" y="498" class="cts" transform="translate(1.9 1.9)" textLength="67.6" lengthAdjust="spacingAndGlyphs">planet</text>
<text x="230" y="114" class="cts" transform="translate(1.9 1.9)" textLength="271" lengthAdjust="spacingAndGlyphs">Location Vectors -&gt; X Y Z</text>
<text x="710" y="82" class="cts" transform="translate(1.9 1.9)" textLength="227.8" lengthAdjust="spacingAndGlyphs">arctan(Z1-Z2/X1-X2)</text>
<text x="1222" y="450" class="cts" transform="translate(1.9 1.9)" textLength="180" lengthAdjust="spacingAndGlyphs">Change Rotation</text>
<text x="22" y="194" class="ct" textLength="66.3" lengthAdjust="spacingAndGlyphs">player</text>
<text x="38" y="498" class="ct" textLength="67.6" lengthAdjust="spacingAndGlyphs">planet</text>
<text x="230" y="114" class="ct" textLength="271" lengthAdjust="spacingAndGlyphs">Location Vectors -&gt; X Y Z</text>
<text x="710" y="82" class="ct" textLength="227.8" lengthAdjust="spacingAndGlyphs">arctan(Z1-Z2/X1-X2)</text>
<text x="1222" y="450" class="ct" textLength="180" lengthAdjust="spacingAndGlyphs">Change Rotation</text>
<text x="39" y="231" class="nt" textLength="126.6" lengthAdjust="spacingAndGlyphs">ThirdPersonCharacter</text>
<text x="39" y="244.6" class="st" textLength="112" lengthAdjust="spacingAndGlyphs">from Persistent Level</text>
<text x="54.2" y="535" class="nt" textLength="57.4" lengthAdjust="spacingAndGlyphs">sphPlanet</text>
<text x="54.2" y="548.6" class="st" textLength="112.3" lengthAdjust="spacingAndGlyphs">from Persistent Level</text>
<text x="278" y="149" class="fi" style="fill:#9cf09a">f</text>
<text x="294.3" y="148.1" class="nt" textLength="102.9" lengthAdjust="spacingAndGlyphs">GetActorLocation</text>
<text x="294.3" y="165.1" class="st" textLength="78.5" lengthAdjust="spacingAndGlyphs">Target is Actor</text>
<text x="296.6" y="191" class="pl" textLength="34.4" lengthAdjust="spacingAndGlyphs">Target</text>
<text x="360.6" y="191" class="pl" textLength="69.4" lengthAdjust="spacingAndGlyphs">Return Value</text>
<text x="278" y="485" class="fi" style="fill:#9cf09a">f</text>
<text x="294.3" y="484.1" class="nt" textLength="102.9" lengthAdjust="spacingAndGlyphs">GetActorLocation</text>
<text x="294.3" y="501.1" class="st" textLength="78.5" lengthAdjust="spacingAndGlyphs">Target is Actor</text>
<text x="296.6" y="527" class="pl" textLength="34.4" lengthAdjust="spacingAndGlyphs">Target</text>
<text x="360.6" y="527" class="pl" textLength="69.4" lengthAdjust="spacingAndGlyphs">Return Value</text>
<text x="1238" y="485" class="fi" style="fill:#9cf09a">f</text>
<text x="1254.3" y="484.1" class="nt" textLength="101.6" lengthAdjust="spacingAndGlyphs">GetActorRotation</text>
<text x="1254.3" y="501.1" class="st" textLength="78.5" lengthAdjust="spacingAndGlyphs">Target is Actor</text>
<text x="1256.6" y="527" class="pl" textLength="34.4" lengthAdjust="spacingAndGlyphs">Target</text>
<text x="1320.6" y="527" class="pl" textLength="69.4" lengthAdjust="spacingAndGlyphs">Return Value</text>
<text x="518.4" y="228.1" class="nt" textLength="74.9" lengthAdjust="spacingAndGlyphs">Break Vector</text>
<text x="520" y="254.9" class="pl" textLength="33" lengthAdjust="spacingAndGlyphs">In Vec</text>
<text x="591" y="254.9" class="pl" text-anchor="end">X</text>
<text x="591" y="280.8" class="pl" text-anchor="end">Y</text>
<text x="591" y="306.7" class="pl" text-anchor="end">Z</text>
<text x="534.4" y="468.1" class="nt" textLength="74.9" lengthAdjust="spacingAndGlyphs">Break Vector</text>
<text x="536" y="494.9" class="pl" textLength="33" lengthAdjust="spacingAndGlyphs">In Vec</text>
<text x="607" y="494.9" class="pl" text-anchor="end">X</text>
<text x="607" y="520.8" class="pl" text-anchor="end">Y</text>
<text x="607" y="546.7" class="pl" text-anchor="end">Z</text>
<text x="764" y="163.3" class="cg" text-anchor="middle">-</text>
<text x="748" y="243.3" class="cg" text-anchor="middle">-</text>
<text x="892.7" y="213.1" class="cd" text-anchor="middle">÷</text>
<text x="764" y="499.3" class="cg" text-anchor="middle">-</text>
<text x="764" y="595.3" class="cg" text-anchor="middle">-</text>
<text x="892.7" y="549.1" class="cd" text-anchor="middle">÷</text>
<text x="870" y="309" class="fi" style="fill:#9cf09a">f</text>
<text x="886.5" y="308" class="nt" textLength="87.6" lengthAdjust="spacingAndGlyphs">Atan (Degrees)</text>
<text x="888.1" y="335" class="pl">A</text>
<text x="925.5" y="335" class="pl" textLength="69.7" lengthAdjust="spacingAndGlyphs">Return Value</text>
<text x="870" y="405" class="fi" style="fill:#9cf09a">f</text>
<text x="886.5" y="404" class="nt" textLength="87.6" lengthAdjust="spacingAndGlyphs">Atan (Degrees)</text>
<text x="888.1" y="431" class="pl">A</text>
<text x="925.5" y="431" class="pl" textLength="69.7" lengthAdjust="spacingAndGlyphs">Return Value</text>
<text x="1075.3" y="313" class="pl" textLength="23.1" lengthAdjust="spacingAndGlyphs">90.0</text>
<text x="1102.5" y="327.4" class="cg" text-anchor="middle">-</text>
<text x="1075.3" y="409" class="pl" textLength="23.1" lengthAdjust="spacingAndGlyphs">90.0</text>
<text x="1102.5" y="423.4" class="cg" text-anchor="middle">-</text>
<text x="1382.8" y="195.9" class="nt" textLength="59.1" lengthAdjust="spacingAndGlyphs">Event Tick</text>
<text x="1364.4" y="250.9" class="pl" textLength="76.6" lengthAdjust="spacingAndGlyphs">Delta Seconds</text>
<text x="1558" y="213" class="fi" style="fill:#78c8ff">f</text>
<text x="1574.3" y="212.2" class="nt" textLength="100.9" lengthAdjust="spacingAndGlyphs">SetActorRotation</text>
<text x="1574.5" y="229.2" class="st" textLength="78.5" lengthAdjust="spacingAndGlyphs">Target is Actor</text>
<text x="1576.4" y="282.7" class="pl" textLength="34.4" lengthAdjust="spacingAndGlyphs">Target</text>
<text x="1716" y="282.7" class="pl" textLength="70.1" lengthAdjust="spacingAndGlyphs">Return Value</text>
<text x="1576.4" y="309" class="pl" textLength="72.3" lengthAdjust="spacingAndGlyphs">New Rotation</text>
<text x="1576.4" y="334.8" class="pl" textLength="88.6" lengthAdjust="spacingAndGlyphs">Teleport Physics</text>
<text x="1510.7" y="483.9" class="nt" textLength="77.5" lengthAdjust="spacingAndGlyphs">Make Rotator</text>
<text x="1512.2" y="510.8" class="pl" textLength="39.6" lengthAdjust="spacingAndGlyphs">X (Roll)</text>
<text x="1512.2" y="536.85" class="pl" textLength="46.5" lengthAdjust="spacingAndGlyphs">Y (Pitch)</text>
<text x="1512.2" y="562.9" class="pl" textLength="41.4" lengthAdjust="spacingAndGlyphs">Z (Yaw)</text>
<text x="1588.2" y="510.8" class="pl" textLength="69.8" lengthAdjust="spacingAndGlyphs">Return Value</text>
<text x="1270.7" y="580" class="nt" textLength="79.7" lengthAdjust="spacingAndGlyphs">Break Rotator</text>
<text x="1272.4" y="606.8" class="pl" textLength="46.3" lengthAdjust="spacingAndGlyphs">Rotation</text>
<text x="1355.4" y="606.8" class="pl" textLength="39.3" lengthAdjust="spacingAndGlyphs">X (Roll)</text>
<text x="1348.3" y="632.8" class="pl" textLength="46.4" lengthAdjust="spacingAndGlyphs">Y (Pitch)</text>
<text x="1352.9" y="658.8" class="pl" textLength="41.8" lengthAdjust="spacingAndGlyphs">Z (Yaw)</text>
<text x="1374" y="830" class="wm" textLength="464.5" lengthAdjust="spacingAndGlyphs">LEVEL BLUEPRINT</text>
</g>
</svg>
<div id="vig"></div>
</body></html>
